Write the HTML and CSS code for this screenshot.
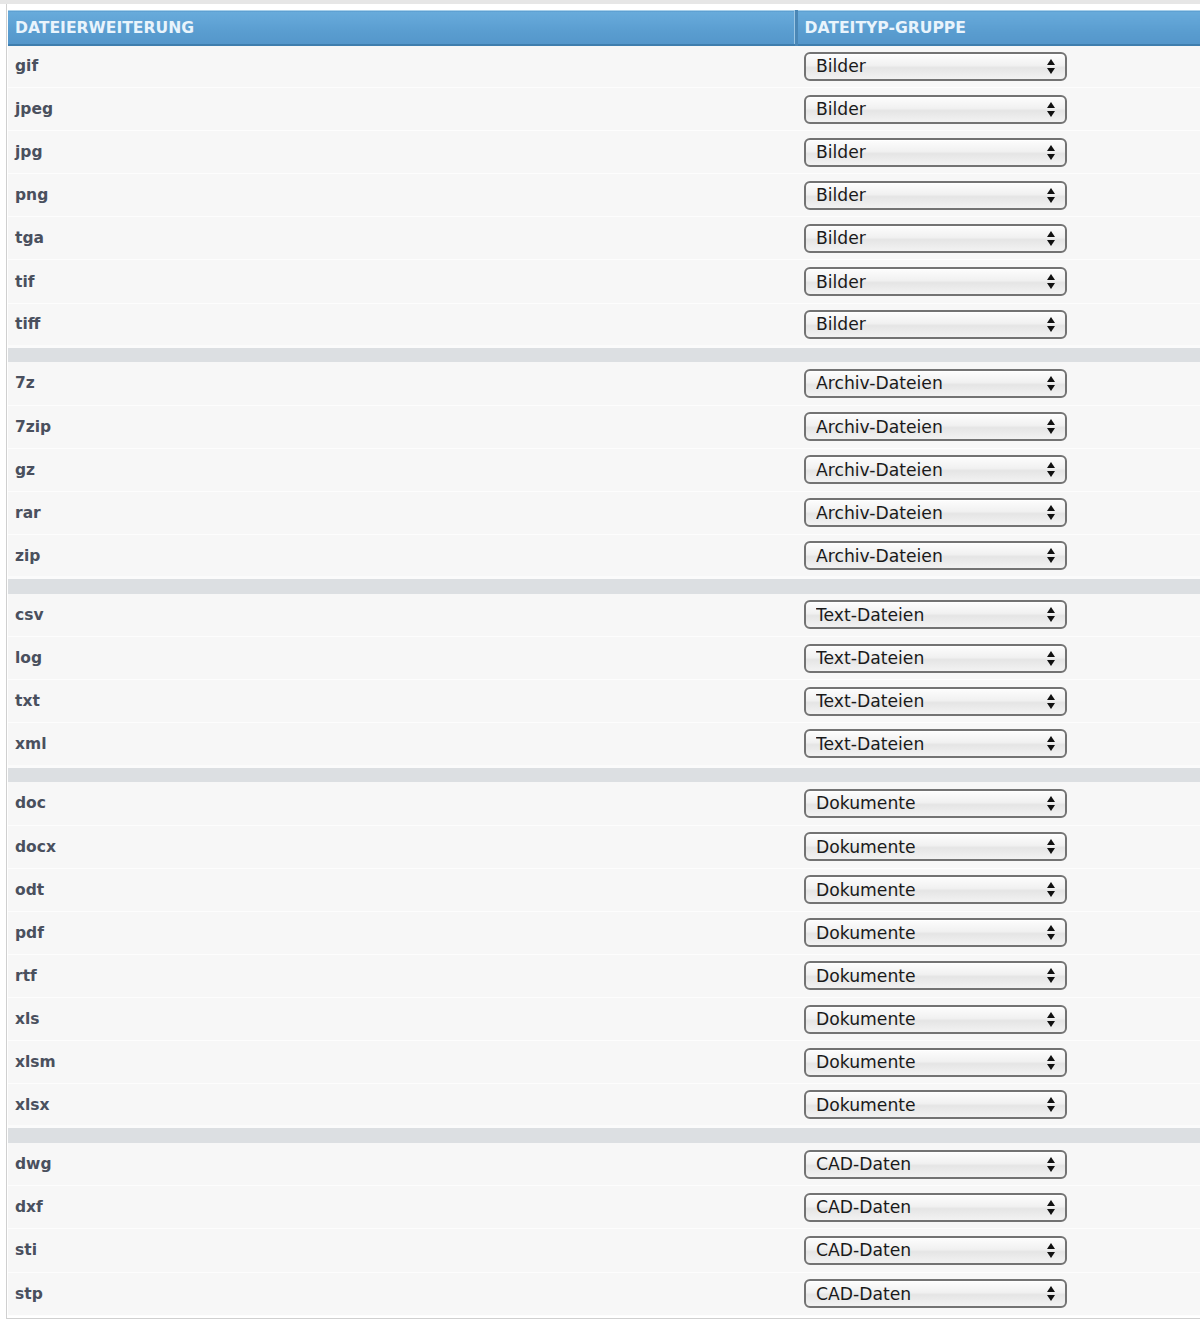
FILE: index.html
```html
<!DOCTYPE html>
<html lang="de">
<head>
    <meta charset="UTF-8">
    <meta name="viewport" content="width=device-width, initial-scale=1.0">
    <title>Dateitypen</title>
    <link rel="stylesheet" href="styles.css">
</head>
<body>
    <div class="topbar"></div>
    <div class="panel">
        <table class="types">
            <colgroup>
                <col class="col-ext">
                <col class="col-group">
            </colgroup>
            <thead>
                <tr>
                    <th class="th-ext">Dateierweiterung</th>
                    <th class="th-group">Dateityp-Gruppe</th>
                </tr>
            </thead>
            <tbody id="rows"></tbody>
        </table>
    </div>

    <script>
        const groups = [
            { name: 'Bilder', items: ['gif', 'jpeg', 'jpg', 'png', 'tga', 'tif', 'tiff'] },
            { name: 'Archiv-Dateien', items: ['7z', '7zip', 'gz', 'rar', 'zip'] },
            { name: 'Text-Dateien', items: ['csv', 'log', 'txt', 'xml'] },
            { name: 'Dokumente', items: ['doc', 'docx', 'odt', 'pdf', 'rtf', 'xls', 'xlsm', 'xlsx'] },
            { name: 'CAD-Daten', items: ['dwg', 'dxf', 'sti', 'stp'] }
        ];
        const allNames = groups.map(g => g.name);
        const tbody = document.getElementById('rows');

        const arrows = '<svg class="arrows" width="8" height="15" viewBox="0 0 8 15">' +
            '<path d="M4 0 L8 6 L0 6 Z" fill="#111"/>' +
            '<path d="M0 9 L8 9 L4 15 Z" fill="#111"/></svg>';

        groups.forEach((group, gi) => {
            // grauer Trenner zwischen den Gruppen
            if (gi > 0) {
                const sep = document.createElement('tr');
                sep.className = 'sep';
                sep.innerHTML = '<td colspan="2"></td>';
                tbody.appendChild(sep);
            }
            group.items.forEach(ext => {
                const tr = document.createElement('tr');
                tr.className = 'row';
                const options = allNames.map(n =>
                    `<option${n === group.name ? ' selected' : ''}>${n}</option>`).join('');
                tr.innerHTML = `<td class="ext">${ext}</td>` +
                    `<td class="group"><span class="select-wrap"><select class="type-select">${options}</select>${arrows}</span></td>`;
                tbody.appendChild(tr);
            });
        });
    </script>
</body>
</html>
```

FILE: styles.css
```css
* {
    margin: 0;
    padding: 0;
    box-sizing: border-box;
}

body {
    background: #ffffff;
    font-family: 'DejaVu Sans', Verdana, sans-serif;
}

.topbar {
    height: 4px;
    background: #e6e6e6;
}

.panel {
    margin-left: 6px;
    padding: 6px 0 2px 1px;
    border-left: 1px solid #d0d0d0;
    border-bottom: 1px solid #d0d0d0;
}

.types {
    width: 100%;
    border-collapse: collapse;
    table-layout: fixed;
}

.col-ext {
    width: 788px;
}

thead th {
    height: 34px;
    padding: 1px 7px 0;
    text-align: left;
    text-transform: uppercase;
    color: #e9f4fc;
    font-size: 15.6px;
    font-weight: bold;
    background: linear-gradient(#68abdb, #5a9dd0 60%, #5496ca);
    border-top: 1px solid #a9d0ea;
    border-bottom: 2px solid #3f7eae;
    vertical-align: middle;
}

.th-ext {
    border-right: 3px solid #4a87b6;
    box-shadow: inset -1px 0 0 #9bc6e4;
}

.row td {
    height: 43.1px;
    background: #f7f7f7;
    border-bottom: 1px solid #fdfdfd;
    vertical-align: middle;
}

.ext {
    padding-left: 7px;
    color: #4a505e;
    font-size: 15.5px;
    font-weight: bold;
}

.group {
    padding-left: 8px;
}

.select-wrap {
    position: relative;
    display: inline-block;
    vertical-align: middle;
}

.type-select {
    appearance: none;
    -webkit-appearance: none;
    display: block;
    width: 263px;
    height: 29px;
    padding: 0 30px 0 10px;
    border: 2px solid #737373;
    border-radius: 6px;
    background: linear-gradient(#fdfdfd, #f1f1f1 45%, #e5e5e5 55%, #f2f2f2);
    box-shadow: inset 0 1px 0 #ffffff;
    font-family: 'DejaVu Sans', Verdana, sans-serif;
    font-size: 17.2px;
    color: #1a1a1a;
    outline: none;
}

.arrows {
    position: absolute;
    right: 12px;
    top: 7px;
    pointer-events: none;
}

.sep td {
    height: 16px;
    background: #dcdfe2;
    border-top: 3px solid #fbfbfb;
}
```
